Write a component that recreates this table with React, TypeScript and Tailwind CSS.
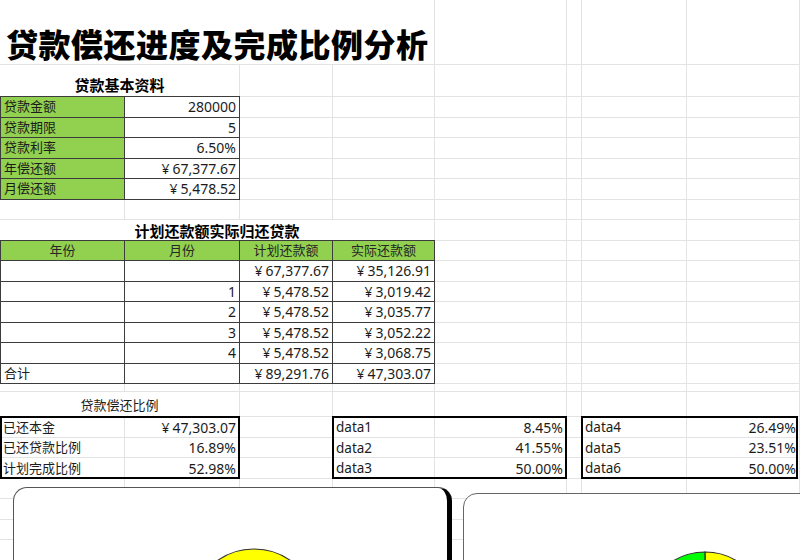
import React from 'react'

// column widths: 125 115 93 102 132 15 105 113
const ROW_COUNT = 24
const COL_COUNT = 8

const dark = 'border-r border-b border-[#3c3c3c]'
const green = 'bg-[#92d050]'

function Backdrop() {
  const cells = []
  for (let r = 1; r <= ROW_COUNT; r++) {
    for (let c = 1; c <= COL_COUNT; c++) {
      cells.push(
        <div
          key={`${r}-${c}`}
          className="border-r border-b border-[#e3e3e3]"
          style={{ gridRow: r, gridColumn: c }}
        />
      )
    }
  }
  return <>{cells}</>
}

// accounting style: yen sign with a small gap before the digits
function Value({ text }: { text: string }) {
  if (!text.startsWith('¥')) return <>{text}</>
  return (
    <>
      <span>¥</span>
      <span className="ml-[3px]">{text.slice(1)}</span>
    </>
  )
}

const basicRows = [
  { row: 'row-start-3 -mt-px border-t', label: '贷款金额', value: '280000' },
  { row: 'row-start-4', label: '贷款期限', value: '5' },
  { row: 'row-start-5', label: '贷款利率', value: '6.50%' },
  { row: 'row-start-6', label: '年偿还额', value: '¥67,377.67' },
  { row: 'row-start-7', label: '月偿还额', value: '¥5,478.52' },
]

const planRows = [
  { row: 'row-start-11', year: '', month: '', plan: '¥67,377.67', real: '¥35,126.91' },
  { row: 'row-start-12', year: '', month: '1', plan: '¥5,478.52', real: '¥3,019.42' },
  { row: 'row-start-13', year: '', month: '2', plan: '¥5,478.52', real: '¥3,035.77' },
  { row: 'row-start-14', year: '', month: '3', plan: '¥5,478.52', real: '¥3,052.22' },
  { row: 'row-start-15', year: '', month: '4', plan: '¥5,478.52', real: '¥3,068.75' },
  { row: 'row-start-16', year: '合计', month: '', plan: '¥89,291.76', real: '¥47,303.07' },
]

const ratioRows = [
  { row: 'row-start-19', a: '已还本金', b: '¥47,303.07', d: 'data1', e: '8.45%', g: 'data4', h: '26.49%' },
  { row: 'row-start-20', a: '已还贷款比例', b: '16.89%', d: 'data2', e: '41.55%', g: 'data5', h: '23.51%' },
  { row: 'row-start-21', a: '计划完成比例', b: '52.98%', d: 'data3', e: '50.00%', g: 'data6', h: '50.00%' },
]

const headCells = [
  { col: 'col-start-1 border-l', text: '年份' },
  { col: 'col-start-2', text: '月份' },
  { col: 'col-start-3', text: '计划还款额' },
  { col: 'col-start-4', text: '实际还款额' },
]

export default function App() {
  return (
    <div className="relative h-[560px] w-[800px] overflow-hidden bg-white font-['Noto_Sans','Noto_Sans_CJK_SC',sans-serif] text-[13px] text-[#1c1c1c]">
      <div className="grid grid-cols-[125px_115px_93px_102px_132px_15px_105px_113px] grid-rows-[65px_32px_repeat(14,20.5px)_8px_25px_repeat(7,20.5px)]">
        <Backdrop />

        {/* Title */}
        <div className="col-start-1 col-span-4 row-start-1 flex items-end border-r border-b border-[#e3e3e3] bg-white pb-[5px] pl-[6px]">
          <h1 className="font-['Noto_Sans_CJK_SC',sans-serif] text-[32px] leading-[32px] font-black tracking-[0.5px] text-black">
            贷款偿还进度及完成比例分析
          </h1>
        </div>

        {/* 贷款基本资料 */}
        <div className="col-start-1 col-span-2 row-start-2 flex items-end justify-center border-r border-b border-[#e3e3e3] bg-white pb-[3px]">
          <span className="text-[15px] leading-[15px] font-bold text-black">贷款基本资料</span>
        </div>
        {basicRows.map((r) => (
          <React.Fragment key={r.label}>
            <div className={`${r.row} col-start-1 flex items-center border-l pl-[3px] ${dark} ${green}`}>
              {r.label}
            </div>
            <div className={`${r.row} col-start-2 flex items-center justify-end bg-white pr-[3px] text-[14px] ${dark}`}>
              <Value text={r.value} />
            </div>
          </React.Fragment>
        ))}

        {/* 计划还款额实际归还贷款 */}
        <div className="col-start-1 col-span-4 row-start-9 flex items-end justify-center border-r border-b border-[#e3e3e3] bg-white pb-[1px]">
          <span className="text-[15px] leading-[16px] font-bold text-black">计划还款额实际归还贷款</span>
        </div>
        {headCells.map((h) => (
          <div
            key={h.text}
            className={`${h.col} row-start-10 -mt-px flex items-center justify-center border-t text-[#262626] ${dark} ${green}`}
          >
            {h.text}
          </div>
        ))}
        {planRows.map((r) => (
          <React.Fragment key={r.row}>
            <div className={`${r.row} col-start-1 flex items-center border-l bg-white pl-[3px] ${dark}`}>{r.year}</div>
            <div className={`${r.row} col-start-2 flex items-center justify-end bg-white pr-[3px] text-[14px] ${dark}`}>{r.month}</div>
            <div className={`${r.row} col-start-3 flex items-center justify-end bg-white pr-[3px] text-[14px] ${dark}`}>
              <Value text={r.plan} />
            </div>
            <div className={`${r.row} col-start-4 flex items-center justify-end bg-white pr-[3px] text-[14px] ${dark}`}>
              <Value text={r.real} />
            </div>
          </React.Fragment>
        ))}

        {/* 贷款偿还比例 */}
        <div className="col-start-1 col-span-2 row-start-18 flex items-end justify-center border-r border-b border-[#e3e3e3] bg-white pb-[4px]">
          <span className="leading-[14px]">贷款偿还比例</span>
        </div>
        {ratioRows.map((r) => (
          <React.Fragment key={r.row}>
            <div className={`${r.row} col-start-1 flex items-center pl-[3px]`}>{r.a}</div>
            <div className={`${r.row} col-start-2 flex items-center justify-end pr-[4px] text-[14px]`}>
              <Value text={r.b} />
            </div>
            <div className={`${r.row} col-start-4 flex items-center pl-[3px] text-[13.5px]`}>{r.d}</div>
            <div className={`${r.row} col-start-5 flex items-center justify-end pr-[4px] text-[14px]`}>{r.e}</div>
            <div className={`${r.row} col-start-7 flex items-center pl-[3px] text-[13.5px]`}>{r.g}</div>
            <div className={`${r.row} col-start-8 flex items-center justify-end pr-[4px] text-[14px]`}>{r.h}</div>
          </React.Fragment>
        ))}
        <div className="col-start-1 col-span-2 row-start-19 row-span-3 -mt-px border-2 border-black" />
        <div className="col-start-4 col-span-2 row-start-19 row-span-3 -mt-px -ml-px border-2 border-black" />
        <div className="col-start-7 col-span-2 row-start-19 row-span-3 -mt-px -ml-px mr-[2px] border-2 border-black" />
      </div>

      {/* Chart 1 */}
      <div className="absolute top-[487px] left-[13px] h-[120px] w-[439px] rounded-[14px] border border-r-[5px] border-[#555] border-r-black bg-white">
        <svg className="absolute top-[60px] left-[176px]" width="128" height="128" viewBox="0 0 128 128">
          <circle cx="64" cy="64" r="63" fill="#ffff00" stroke="#333" strokeWidth="1.2" />
        </svg>
      </div>

      {/* Chart 2 */}
      <div className="absolute top-[493px] left-[463px] h-[120px] w-[360px] rounded-[14px] border border-[#666] bg-white">
        <svg className="absolute top-[57px] left-[180px]" width="122" height="122" viewBox="0 0 122 122">
          <path d="M61 61 L61 1 A60 60 0 0 1 61 121 Z" fill="#ffff00" stroke="#333" strokeWidth="1.2" />
          <path d="M61 61 L61 121 A60 60 0 0 1 61 1 Z" fill="#00ff00" stroke="#333" strokeWidth="1.2" />
        </svg>
      </div>
    </div>
  )
}
